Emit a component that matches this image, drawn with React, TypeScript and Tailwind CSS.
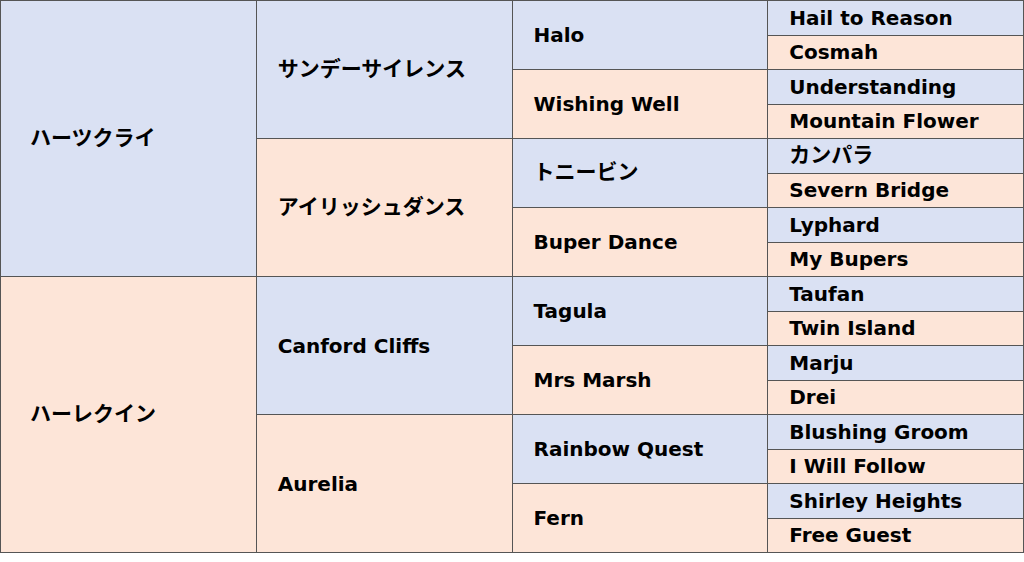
const BLUE = "bg-[#dae1f3]";
const PEACH = "bg-[#fde5d8]";

// ── Pedigree data (sire first, dam second at every level) ───────────────────

const gen1 = ["ハーツクライ", "ハーレクイン"];
const gen2 = ["サンデーサイレンス", "アイリッシュダンス", "Canford Cliffs", "Aurelia"];
const gen3 = ["Halo", "Wishing Well", "トニービン", "Buper Dance", "Tagula", "Mrs Marsh", "Rainbow Quest", "Fern"];
const gen4 = [
  "Hail to Reason", "Cosmah", "Understanding", "Mountain Flower",
  "カンパラ", "Severn Bridge", "Lyphard", "My Bupers",
  "Taufan", "Twin Island", "Marju", "Drei",
  "Blushing Groom", "I Will Follow", "Shirley Heights", "Free Guest",
];

const rowStart: Record<number, string> = {
  1: "row-start-1", 2: "row-start-2", 3: "row-start-3", 4: "row-start-4",
  5: "row-start-5", 6: "row-start-6", 7: "row-start-7", 8: "row-start-8",
  9: "row-start-9", 10: "row-start-10", 11: "row-start-11", 12: "row-start-12",
  13: "row-start-13", 14: "row-start-14", 15: "row-start-15", 16: "row-start-16",
};

const rowSpan: Record<number, string> = {
  1: "row-span-1", 2: "row-span-2", 4: "row-span-4", 8: "row-span-8",
};

const colStart = ["col-start-1", "col-start-2", "col-start-3", "col-start-4"];

function Cell({ name, index, col, span, pad }: { name: string; index: number; col: number; span: number; pad: string }) {
  const color = index % 2 === 0 ? BLUE : PEACH;
  // katakana names render a touch larger in the original
  const size = /[\u30a0-\u30ff]/.test(name) ? "text-[21px]" : "text-[20px]";
  return (
    <div
      className={`${colStart[col]} ${rowStart[index * span + 1]} ${rowSpan[span]} ${color} flex items-center ${pad} font-bold ${size} text-black whitespace-nowrap`}
    >
      {name}
    </div>
  );
}

export default function App() {
  return (
    <div
      className="w-[1024px] h-[562px] bg-white"
      style={{ fontFamily: '"DejaVu Sans", "Noto Sans CJK JP", sans-serif' }}
    >
      <div className="w-[1024px] h-[553px] bg-[#555555] p-px grid grid-cols-4 grid-rows-[repeat(16,minmax(0,1fr))] gap-px">
        {gen1.map((n, i) => <Cell key={n} name={n} index={i} col={0} span={8} pad="pl-[29px]" />)}
        {gen2.map((n, i) => <Cell key={n} name={n} index={i} col={1} span={4} pad="pl-[21px]" />)}
        {gen3.map((n, i) => <Cell key={n} name={n} index={i} col={2} span={2} pad="pl-[21px]" />)}
        {gen4.map((n, i) => <Cell key={n} name={n} index={i} col={3} span={1} pad="pl-[21px]" />)}
      </div>
    </div>
  );
}
